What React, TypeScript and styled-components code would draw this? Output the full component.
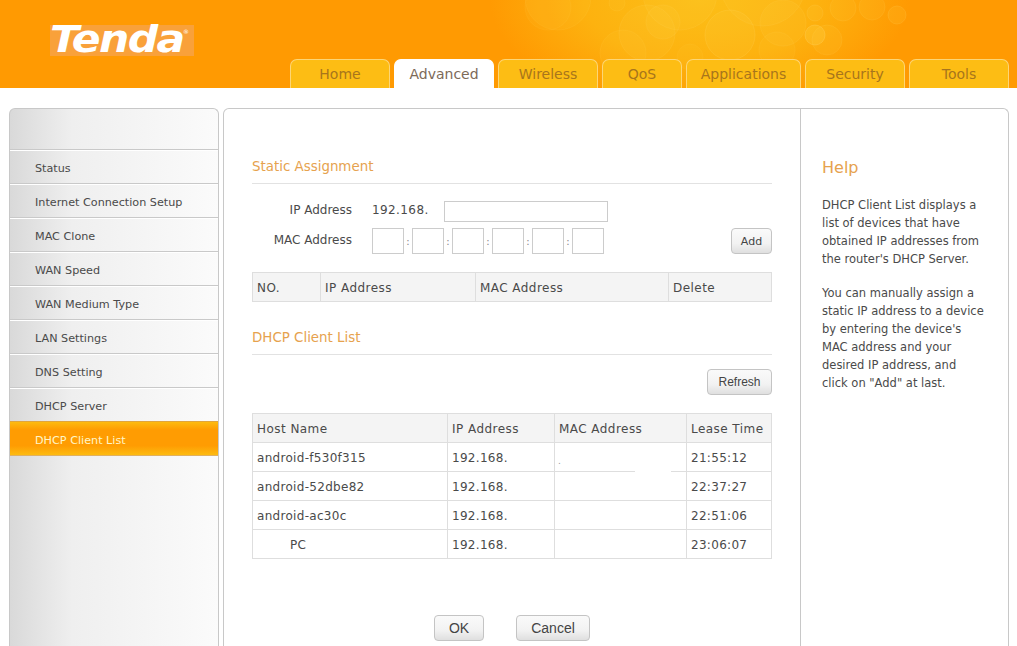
import React from 'react';
import styled, { createGlobalStyle } from 'styled-components';

const GlobalStyle = createGlobalStyle`
  html, body {
    margin: 0;
    height: 646px;
    overflow: hidden;
    background: #fff;
    font-family: "DejaVu Sans", Verdana, sans-serif;
    font-size: 12px;
    color: #4a4a4a;
  }
`;

const Header = styled.header`
  position: relative;
  height: 88px;
  overflow: hidden;
  display: flex;
  justify-content: space-between;
  align-items: flex-end;
  padding-right: 8px;
  background: radial-gradient(ellipse 210px 110px at 700px 0, #fcbf18 0%, #fdb20f 55%, #ff9a02 100%), #ff9a02;
`;

const Bubbles = styled.svg`
  position: absolute;
  left: 0;
  top: 0;
`;

const Logo = styled.div`
  position: absolute;
  left: 50px;
  top: 25px;
  width: 144px;
  height: 31px;
  background: #f9a13a;
  color: #fff;
  font-family: "DejaVu Sans", Verdana, sans-serif;
  font-style: italic;
  font-weight: 700;
  font-size: 38px;
  line-height: 28px;
`;

const LogoWord = styled.span`
  display: inline-block;
  letter-spacing: -1.5px;
  transform: scaleX(1.12);
  transform-origin: left center;
`;

const LogoMark = styled.span`
  position: absolute;
  left: 133px;
  top: 4px;
  font-size: 6px;
  line-height: 6px;
  font-style: normal;
  font-weight: 400;
`;

const Tabs = styled.nav`
  position: relative;
  margin-left: auto;
  display: flex;
  gap: 4px;
`;

const Tab = styled.a<{ $w: number; $active?: boolean }>`
  box-sizing: border-box;
  width: ${p => p.$w}px;
  height: 29px;
  display: flex;
  align-items: center;
  justify-content: center;
  font-size: 14px;
  color: ${p => (p.$active ? '#7d6a58' : '#a8751c')};
  background: ${p => (p.$active ? '#fff' : '#fdbd14')};
  border: 1px solid ${p => (p.$active ? '#fff' : '#fdd676')};
  border-bottom: 0;
  border-radius: 7px 7px 0 0;
`;

const Body = styled.div`
  display: flex;
  gap: 4px;
  padding: 20px 8px 0 9px;
`;

const Sidebar = styled.aside`
  box-sizing: border-box;
  width: 210px;
  height: 560px;
  padding-top: 40px;
  border: 1px solid #c8c8c8;
  border-bottom: 0;
  border-radius: 6px 6px 0 0;
  background: linear-gradient(90deg, #d9d9d9 0%, #efefef 30%, #fbfbfb 100%);
`;

const MenuItem = styled.div<{ $active?: boolean }>`
  box-sizing: border-box;
  height: 34px;
  display: flex;
  align-items: center;
  padding: 4px 0 0 25px;
  font-size: 11.2px;
  color: ${p => (p.$active ? '#fff6c8' : '#4a4a4a')};
  border-top: 1px solid ${p => (p.$active ? '#e0a63c' : '#c9c9c9')};
  box-shadow: ${p => (p.$active ? 'none' : 'inset 0 1px 0 #fff')};
  background: ${p => (p.$active ? 'linear-gradient(180deg, #fdbb10 0%, #ff9c02 24%, #ff9c02 72%, #fdbb10 100%)' : 'transparent')};
  &:last-child {
    height: 35px;
    border-bottom: 1px solid #e0b060;
  }
`;

const Main = styled.main`
  box-sizing: border-box;
  width: 786px;
  height: 560px;
  display: flex;
  border: 1px solid #c8c8c8;
  border-bottom: 0;
  border-radius: 6px 6px 0 0;
`;

const Content = styled.div`
  box-sizing: border-box;
  width: 577px;
  padding: 48px 28px 0 28px;
  border-right: 1px solid #c8c8c8;
`;

const SectionTitle = styled.h2<{ $mt?: number }>`
  margin: ${p => p.$mt ?? 0}px 0 0;
  height: 26px;
  line-height: 20px;
  font-size: 13.4px;
  font-weight: 400;
  color: #e6a24e;
  border-bottom: 1px solid #e2e2e2;
`;

const FormRow = styled.div<{ $h: number; $mt?: number }>`
  display: flex;
  align-items: center;
  height: ${p => p.$h}px;
  margin-top: ${p => p.$mt ?? 0}px;
`;

const FieldLabel = styled.label`
  width: 100px;
  padding-bottom: 2px;
  text-align: right;
  margin-right: 20px;
`;

const Prefix = styled.span`
  width: 72px;
  padding-bottom: 2px;
  letter-spacing: 0.4px;
`;

const TextInput = styled.input`
  box-sizing: border-box;
  width: 164px;
  height: 21px;
  padding: 0;
  border: 1px solid #ccc;
  background: #fff;
`;

const MacInput = styled.input`
  box-sizing: border-box;
  width: 32px;
  height: 26px;
  padding: 0;
  border: 1px solid #ccc;
  background: #fff;
`;

const MacSep = styled.span`
  width: 8px;
  text-align: center;
  font-size: 10px;
  color: #888;
`;

const Button = styled.button<{ $w: number; $big?: boolean }>`
  box-sizing: border-box;
  width: ${p => p.$w}px;
  height: 26px;
  padding: 0;
  border: 1px solid #c4c4c4;
  border-radius: 4px;
  background: linear-gradient(180deg, #fafafa 0%, #f2f2f2 60%, #dfdfdf 100%);
  color: #444;
  font-family: "Liberation Sans", Arial, sans-serif;
  font-size: ${p => (p.$big ? 14 : 12)}px;
`;

const AddButton = styled(Button)`
  margin-left: auto;
  font-family: "DejaVu Sans", Verdana, sans-serif;
  font-size: 11px;
`;

const Table = styled.table<{ $mt: number }>`
  width: 519px;
  margin-top: ${p => p.$mt}px;
  border-collapse: collapse;
  table-layout: fixed;
`;

const Th = styled.th<{ $w: number }>`
  box-sizing: border-box;
  width: ${p => p.$w}px;
  height: 29px;
  padding: 1px 0 0 4px;
  text-align: left;
  font-weight: 400;
  letter-spacing: 0.45px;
  background: #f4f4f4;
  border: 1px solid #dedede;
`;

const Td = styled.td<{ $indent?: boolean }>`
  position: relative;
  box-sizing: border-box;
  height: 29px;
  padding: 1px 0 0 ${p => (p.$indent ? 37 : 4)}px;
  border: 1px solid #dedede;
  letter-spacing: 0.3px;
`;

const Redaction = styled.span`
  position: absolute;
  left: 80px;
  bottom: -2px;
  width: 36px;
  height: 4px;
  background: #fff;
`;

const Dot = styled.span`
  position: absolute;
  left: 3px;
  top: 14px;
  font-size: 9px;
  line-height: 9px;
  color: #999;
`;

const RefreshRow = styled.div`
  display: flex;
  justify-content: flex-end;
  margin-top: 14px;
`;

const Actions = styled.div`
  display: flex;
  gap: 32px;
  margin-top: 56px;
  padding-left: 182px;
`;

const Help = styled.aside`
  flex: 1;
  padding: 50px 0 0 21px;
`;

const HelpTitle = styled.h3`
  margin: 0 0 19px;
  line-height: 18px;
  font-size: 16px;
  font-weight: 400;
  color: #e6a24e;
`;

const HelpText = styled.p`
  width: 163px;
  margin: 0 0 16px;
  line-height: 18px;
  font-size: 11.5px;
`;

const tabs = [
  { label: 'Home', w: 100 },
  { label: 'Advanced', w: 100, active: true },
  { label: 'Wireless', w: 100 },
  { label: 'QoS', w: 80 },
  { label: 'Applications', w: 115 },
  { label: 'Security', w: 100 },
  { label: 'Tools', w: 100 },
];

const menu = [
  'Status',
  'Internet Connection Setup',
  'MAC Clone',
  'WAN Speed',
  'WAN Medium Type',
  'LAN Settings',
  'DNS Setting',
  'DHCP Server',
  'DHCP Client List',
];

const clients = [
  { host: 'android-f530f315', time: '21:55:12' },
  { host: 'android-52dbe82', time: '22:37:27' },
  { host: 'android-ac30c', time: '22:51:06' },
  { host: 'PC', time: '23:06:07' },
];

// [cx, cy, r, opacity]
const bubbles = [
  [558, -3, 33, 0.08], [548, 7, 23, 0.07], [647, 33, 28, 0.1], [663, 22, 17, 0.1],
  [680, -7, 37, 0.1], [730, 35, 25, 0.14], [783, 23, 23, 0.1], [763, -17, 43, 0.1],
  [815, 35, 10, 0.25], [827, 40, 15, 0.1], [815, 13, 8, 0.12], [843, 8, 13, 0.1],
  [872, 7, 13, 0.1], [897, 15, 9, 0.14], [617, 3, 8, 0.08], [623, 53, 23, 0.08],
  [777, 50, 18, 0.08], [690, 57, 13, 0.06],
];

const App: React.FC = () => {
  return (
    <>
      <GlobalStyle />
      <Header>
        <Bubbles width="1017" height="88" viewBox="0 0 1017 88">
          {bubbles.map(([cx, cy, r, o], i) => (
            <circle key={i} cx={cx} cy={cy} r={r} fill="#ffd64a" fillOpacity={o} stroke="#ffe080" strokeOpacity={o} />
          ))}
        </Bubbles>
        <Logo>
          <LogoWord>Tenda</LogoWord>
          <LogoMark>®</LogoMark>
        </Logo>
        <Tabs>
          {tabs.map(t => (
            <Tab key={t.label} $w={t.w} $active={t.active}>{t.label}</Tab>
          ))}
        </Tabs>
      </Header>
      <Body>
        <Sidebar>
          {menu.map((m, i) => (
            <MenuItem key={m} $active={i === menu.length - 1}>{m}</MenuItem>
          ))}
        </Sidebar>
        <Main>
          <Content>
            <SectionTitle>Static Assignment</SectionTitle>
            <FormRow $h={30} $mt={12}>
              <FieldLabel>IP Address</FieldLabel>
              <Prefix>192.168.</Prefix>
              <TextInput />
            </FormRow>
            <FormRow $h={30}>
              <FieldLabel>MAC Address</FieldLabel>
              {[0, 1, 2, 3, 4, 5].map(i => (
                <React.Fragment key={i}>
                  {i > 0 && <MacSep>:</MacSep>}
                  <MacInput />
                </React.Fragment>
              ))}
              <AddButton $w={41}>Add</AddButton>
            </FormRow>
            <Table $mt={16}>
              <thead>
                <tr>
                  <Th $w={68}>NO.</Th>
                  <Th $w={155}>IP Address</Th>
                  <Th $w={193}>MAC Address</Th>
                  <Th $w={103}>Delete</Th>
                </tr>
              </thead>
            </Table>
            <SectionTitle $mt={26}>DHCP Client List</SectionTitle>
            <RefreshRow>
              <Button $w={65}>Refresh</Button>
            </RefreshRow>
            <Table $mt={18}>
              <thead>
                <tr>
                  <Th $w={195}>Host Name</Th>
                  <Th $w={107}>IP Address</Th>
                  <Th $w={132}>MAC Address</Th>
                  <Th $w={85}>Lease Time</Th>
                </tr>
              </thead>
              <tbody>
                {clients.map((c, i) => (
                  <tr key={c.host}>
                    <Td $indent={c.host === 'PC'}>{c.host}</Td>
                    <Td>192.168.</Td>
                    <Td>
                      {i === 0 && <Dot>.</Dot>}
                      {i === 0 && <Redaction />}
                    </Td>
                    <Td>{c.time}</Td>
                  </tr>
                ))}
              </tbody>
            </Table>
            <Actions>
              <Button $w={50} $big>OK</Button>
              <Button $w={74} $big>Cancel</Button>
            </Actions>
          </Content>
          <Help>
            <HelpTitle>Help</HelpTitle>
            <HelpText>
              DHCP Client List displays a list of devices that have obtained IP addresses from the router's DHCP Server.
            </HelpText>
            <HelpText>
              You can manually assign a static IP address to a device by entering the device's MAC address and your desired IP address, and click on "Add" at last.
            </HelpText>
          </Help>
        </Main>
      </Body>
    </>
  );
};

export default App;
